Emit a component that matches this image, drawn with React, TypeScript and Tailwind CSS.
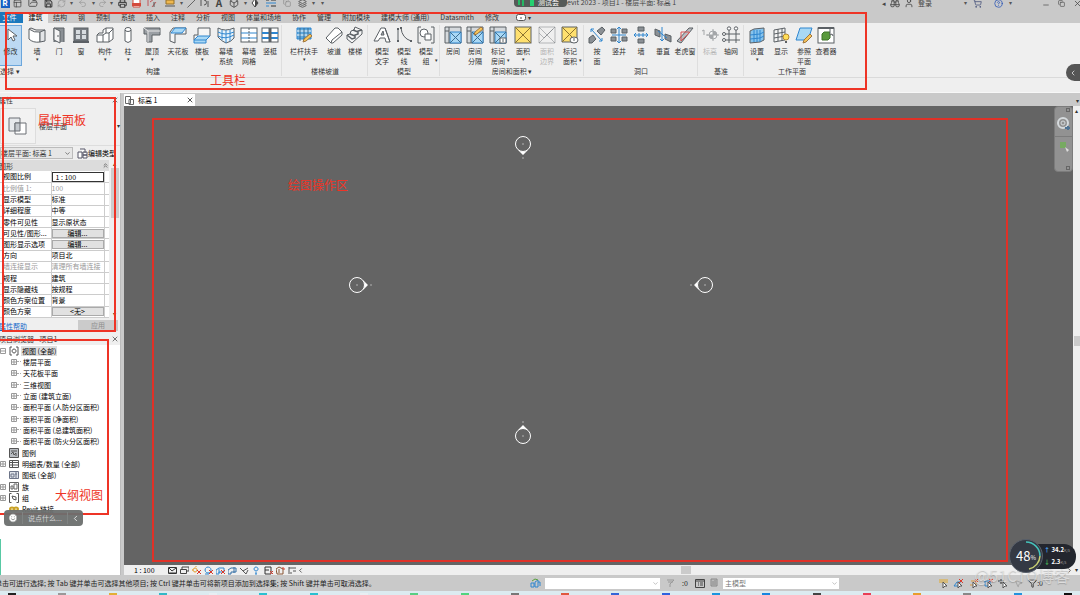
import type { ReactNode } from 'react';
import {
  Binoculars, Box, ChevronDown, ChevronLeft, ChevronRight, ChevronsUp, CircleHelp, Copy, Filter, FolderOpen,
  Layers, Minus, MousePointer2, PanelsTopLeft, Printer, Redo2, RefreshCw, Save, ShoppingCart, Slash, Smile,
  Undo2, User, X,
} from 'lucide-react';

const INK = '#5b6065';
const BLUE = '#2f86cf';
const SKY = '#a9d8f5';

// Ribbon drawings, all on an 18x18 grid
const drawings: Record<string, ReactNode> = {
  modify: <path d="M6 3v11l3-3 2 4 2-1-2-4h4z" fill="#fff" stroke={INK} />,
  wall: (
    <>
      <path d="M1 3q5 4 11 3v10Q5 17 1 13z" fill="#fff" stroke={INK} />
      <path d="M1 3l2-1q5 3 10 2h4v11l-5 1V6l5-2" fill="#e3e5e7" stroke={INK} />
    </>
  ),
  door: (
    <>
      <path d="M4 16V2h10v14" fill="#8b9095" stroke={INK} />
      <path d="M4 2l6 3v12l-6-3z" fill="#f4f4f4" stroke={INK} />
      <path d="M8 9v2" stroke={INK} />
    </>
  ),
  window: (
    <>
      <rect x="2" y="2" width="14" height="13" fill="#777c82" stroke={INK} />
      <path d="M4 4h4v4H4zM10 4h4v4h-4zM4 9h4v4H4zM10 9h4v4h-4z" fill="#d7dce0" />
      <path d="M1 16h16" stroke={INK} strokeWidth="2" />
    </>
  ),
  component: (
    <>
      <path d="M1 9l2-2h4V4l3-2h7v11l-4 3H1z" fill="#fff" stroke={INK} />
      <path d="M1 9h6l3-2V2M7 9v7M10 7h3l4-4M13 7v9" fill="none" stroke={INK} />
    </>
  ),
  column: (
    <>
      <path d="M6 4v11q3 3 6 0V4" fill="#fff" stroke={INK} />
      <ellipse cx="9" cy="3.500" rx="3" ry="2" fill="#fff" stroke={INK} />
    </>
  ),
  roof: (
    <>
      <path d="M1 2h16v7H9v7H4v-8H1z" fill="#9a9fa4" stroke={INK} />
      <path d="M1 2l4 3h12M5 5v11" fill="none" stroke="#e8e8e8" />
    </>
  ),
  ceiling: (
    <>
      <path d="M1 6l3-4h13v6H6v9l-5-2z" fill="#f5f5f5" stroke={INK} />
      <path d="M2 7l4-5h11l-4 5z" fill={SKY} stroke={BLUE} />
    </>
  ),
  floor: (
    <>
      <path d="M5 2h12v8l-4 4H1V9h4z" fill="#f5f5f5" stroke={INK} />
      <path d="M1 14l4-4h12l-4 4v3H1zM1 14h12" fill={SKY} stroke={BLUE} />
    </>
  ),
  curtainSystem: (
    <>
      <path d="M1 2q7 4 16 0v10q-3 4-8 5-5-2-8-6z" fill="#e7f3fb" stroke={INK} />
      <path d="M1 6q7 4 16 0M1 10q7 4 16-1M5 4v10M9 4v13M13 4v11" fill="none" stroke={BLUE} />
    </>
  ),
  curtainGrid: (
    <>
      <rect x="1" y="2" width="16" height="14" fill="#fff" stroke={INK} />
      <path d="M1 7h16M1 12h16" stroke={BLUE} />
      <path d="M9 2v14" stroke={INK} strokeDasharray="2 1" />
    </>
  ),
  mullion: (
    <>
      <rect x="1" y="2" width="16" height="14" fill="#fff" stroke={INK} />
      <path d="M1 7h16M1 12h16" stroke={BLUE} strokeWidth="2" />
      <path d="M9 2v14" stroke={INK} strokeWidth="3" />
    </>
  ),
  railing: (
    <>
      <path d="M2 2h14v11H2z" fill="#5fa9dd" stroke={BLUE} />
      <path d="M2 5h14M2 9h14" stroke="#fff" />
      <path d="M5 2v13M9 2v13M13 2v10" stroke="#3b6c93" />
      <path d="M8 16l1-3 6-5 2 2-6 5z" fill="#f7c65b" stroke="#a0753c" />
    </>
  ),
  ramp: (
    <>
      <path d="M1 12L10 2h3l4 4v3l-9 8H6z" fill="#fff" stroke={INK} />
      <path d="M6 17l1-3 10-8" fill="none" stroke={INK} />
    </>
  ),
  stair: (
    <>
      <path d="M1 9l3-1 1-3 3-1 1-3 7 3v4L6 17l-5-4z" fill="#f5f5f5" stroke={INK} />
      <path d="M1 9l5 4 3-1V9l3-1V5l4-1M4 8l5 2M7 4l5 2" fill="none" stroke={INK} strokeWidth="1.500" />
    </>
  ),
  modelText: (
    <>
      <path d="M1 15L8 2h4l5 14h-4l-1-4H7l-2 3z" fill="#fff" stroke={INK} />
      <path d="M8 9h3l-1-4zM12 2l5 14" fill="#aab0b5" stroke={INK} />
    </>
  ),
  modelLine: (
    <>
      <path d="M3 3v12M6 2q1 10 10 13" fill="none" stroke={INK} />
      <path d="M2 2h2v2H2zM2 14h2v2H2zM5 1h2v2H5zM15 14h2v2h-2z" fill={INK} />
    </>
  ),
  modelGroup: (
    <>
      <path d="M4 1H1v16h3M14 1h3v16h-3" fill="none" stroke={INK} />
      <circle cx="7" cy="7" r="4" fill="#fff" stroke={INK} />
      <path d="M8 8h6v6H8z" fill="#fff" stroke={INK} />
    </>
  ),
  room: <RoomBase />,
  roomSplit: (
    <>
      <RoomBase />
      <path d="M8 9l1-3 6-5 2 2-6 5z" fill="#f7c65b" stroke="#a0753c" />
    </>
  ),
  roomTag: (
    <>
      <RoomBase />
      <rect x="11" y="12" width="6" height="5" fill="#fff" stroke={INK} />
      <path d="M14 13v3" stroke={INK} />
    </>
  ),
  area: (
    <>
      <rect x="1" y="1" width="16" height="16" fill="#ffe06e" stroke={INK} />
      <path d="M1 1l16 16M17 1L1 17" stroke="#8d7331" />
    </>
  ),
  areaEdge: (
    <g opacity=".4">
      <path d="M1 1h16v16H1zM1 1l16 16M17 1L1 17M1 7l5 5 9-9" fill="none" stroke={INK} />
    </g>
  ),
  areaTag: (
    <>
      <path d="M1 1h15v15H1z" fill="#ffe06e" stroke={INK} />
      <path d="M1 1l15 15M16 1L1 16" stroke="#8d7331" />
      <ellipse cx="13" cy="14" rx="4" ry="3" fill="#fff" stroke={INK} />
      <path d="M13 12v3" stroke={INK} />
    </>
  ),
  byFace: (
    <>
      <path d="M9 5l5-4 3 3-4 5zM1 12l4-3 3 4-4 4H1z" fill="#8b9095" stroke={INK} />
      <path d="M3 3l11 12M3 6V3h3M14 12v3h-3" fill="none" stroke={BLUE} />
    </>
  ),
  shaft: (
    <>
      <path d="M1 3h5v4H1zM12 3h5v4h-5zM1 11h5v4H1zM12 11h5v4h-5z" fill="#8b9095" stroke={INK} />
      <path d="M9 1v16M2 9h14M7 3l2-2 2 2M7 15l2 2 2-2" fill="none" stroke={BLUE} />
    </>
  ),
  wallOpening: (
    <>
      <path d="M6 1h6v4H6zM6 13h6v4H6z" fill="#8b9095" stroke={INK} />
      <path d="M2 9h14M4 7L2 9l2 2M14 7l2 2-2 2M7 7v4M11 7v4" fill="none" stroke={BLUE} />
    </>
  ),
  vertical: (
    <>
      <path d="M1 3l5 2v6L1 9zM11 8l6 2v6l-6-3z" fill="#8b9095" stroke={INK} />
      <path d="M8 1v14M4 5l9 7M6 13l2 2 2-2" fill="none" stroke={BLUE} />
    </>
  ),
  dormer: (
    <>
      <path d="M1 15L13 2h4L5 17z" fill="#b8bcc0" stroke={INK} />
      <path d="M5 15V6h8M5 15l9-9" fill="none" stroke="#d65050" />
    </>
  ),
  level: (
    <g opacity=".5">
      <path d="M1 5l2-1v5M5 9h2" fill="none" stroke={INK} />
      <circle cx="12" cy="9" r="4" fill="#fff" stroke={INK} />
      <path d="M12 9V5a4 4 0 0 1 4 4zM12 9v4a4 4 0 0 1-4-4z" fill={INK} />
      <path d="M12 3v12M6 9h12" stroke={INK} />
    </g>
  ),
  grid: (
    <>
      <path d="M7 4v13M14 4v13M3 8h15M3 14h15" stroke={INK} />
      <circle cx="7" cy="2.500" r="1.700" fill="#fff" stroke={INK} />
      <circle cx="14" cy="2.500" r="1.700" fill="#fff" stroke={INK} />
      <circle cx="2" cy="8" r="1.500" fill="#fff" stroke={INK} />
      <circle cx="2" cy="14" r="1.500" fill="#fff" stroke={INK} />
    </>
  ),
  setPlane: (
    <>
      <path d="M2 5l4-2 10-1v12l-4 2-10 1z" fill="#87c4ee" stroke={INK} />
      <path d="M2 9l10-1 4-2M2 13l10-1 4-2M6 4v12M9 4v12M12 4v12" fill="none" stroke={BLUE} />
    </>
  ),
  showPlane: (
    <>
      <path d="M2 4l11-2v12L2 16zM2 8l11-2M2 12l11-2M6 3v12M10 3v12" fill="#f5f5f5" stroke={INK} />
      <circle cx="14" cy="11" r="3" fill="#ffdf58" stroke="#b8892c" />
      <path d="M13 15h2v2h-2z" fill={INK} />
    </>
  ),
  refPlane: (
    <>
      <path d="M5 2h12l-4 12H1z" fill={SKY} stroke={BLUE} />
      <path d="M8 17l1-3 6-6 2 2-6 6z" fill="#f7c65b" stroke="#a0753c" />
    </>
  ),
  viewer: (
    <>
      <rect x="1" y="2" width="16" height="15" fill="#fff" stroke={INK} />
      <path d="M1 2h16" stroke={INK} strokeWidth="2" />
      <path d="M5 8l2-2h6v6l-2 2H5z" fill="#5a9a3c" stroke="#3e7529" />
      <path d="M13 3v6l2-1 1 2" fill="#fff" stroke={INK} />
    </>
  ),
};

function RoomBase() {
  return (
    <>
      <path d="M1 1h16v16H1z" fill="#d5d9dc" stroke={INK} />
      <path d="M6 6h11v11H6z" fill={SKY} stroke={BLUE} />
      <path d="M6 6l11 11M17 6L6 17" stroke="#3d6f94" />
      <path d="M5 1v16M1 5h4" stroke={INK} />
    </>
  );
}

interface Tool {
  icon: string;
  lines: string[];
  width: string;
  arrow?: boolean;
  disabled?: boolean;
}

interface ToolPanel {
  title: string;
  tools: Tool[];
  arrow?: boolean;
}

const panels: ToolPanel[] = [
  {
    title: '构建',
    tools: [
      { icon: 'wall', lines: ['墙'], width: 'w-[22px]', arrow: true },
      { icon: 'door', lines: ['门'], width: 'w-[22px]' },
      { icon: 'window', lines: ['窗'], width: 'w-[22px]' },
      { icon: 'component', lines: ['构件'], width: 'w-[26px]', arrow: true },
      { icon: 'column', lines: ['柱'], width: 'w-5', arrow: true },
      { icon: 'roof', lines: ['屋顶'], width: 'w-7', arrow: true },
      { icon: 'ceiling', lines: ['天花板'], width: 'w-6' },
      { icon: 'floor', lines: ['楼板'], width: 'w-6', arrow: true },
      { icon: 'curtainSystem', lines: ['幕墙', '系统'], width: 'w-6' },
      { icon: 'curtainGrid', lines: ['幕墙', '网格'], width: 'w-[22px]' },
      { icon: 'mullion', lines: ['竖梃'], width: 'w-5' },
    ],
  },
  {
    title: '楼梯坡道',
    tools: [
      { icon: 'railing', lines: ['栏杆扶手'], width: 'w-10', arrow: true },
      { icon: 'ramp', lines: ['坡道'], width: 'w-5' },
      { icon: 'stair', lines: ['楼梯'], width: 'w-[22px]' },
    ],
  },
  {
    title: '模型',
    tools: [
      { icon: 'modelText', lines: ['模型', '文字'], width: 'w-6' },
      { icon: 'modelLine', lines: ['模型', '线'], width: 'w-5' },
      { icon: 'modelGroup', lines: ['模型', '组'], width: 'w-6', arrow: true },
    ],
  },
  {
    title: '房间和面积',
    arrow: true,
    tools: [
      { icon: 'room', lines: ['房间'], width: 'w-[22px]' },
      { icon: 'roomSplit', lines: ['房间', '分隔'], width: 'w-[22px]' },
      { icon: 'roomTag', lines: ['标记', '房间'], width: 'w-6', arrow: true },
      { icon: 'area', lines: ['面积'], width: 'w-[26px]', arrow: true },
      { icon: 'areaEdge', lines: ['面积', '边界'], width: 'w-[22px]', disabled: true },
      { icon: 'areaTag', lines: ['标记', '面积'], width: 'w-6', arrow: true },
    ],
  },
  {
    title: '洞口',
    tools: [
      { icon: 'byFace', lines: ['按', '面'], width: 'w-[22px]' },
      { icon: 'shaft', lines: ['竖井'], width: 'w-[22px]' },
      { icon: 'wallOpening', lines: ['墙'], width: 'w-[22px]' },
      { icon: 'vertical', lines: ['垂直'], width: 'w-[22px]' },
      { icon: 'dormer', lines: ['老虎窗'], width: 'w-[22px]' },
    ],
  },
  {
    title: '基准',
    tools: [
      { icon: 'level', lines: ['标高'], width: 'w-5', disabled: true },
      { icon: 'grid', lines: ['轴网'], width: 'w-[22px]' },
    ],
  },
  {
    title: '工作平面',
    tools: [
      { icon: 'setPlane', lines: ['设置'], width: 'w-[22px]', arrow: true },
      { icon: 'showPlane', lines: ['显示'], width: 'w-[26px]' },
      { icon: 'refPlane', lines: ['参照', '平面'], width: 'w-5' },
      { icon: 'viewer', lines: ['查看器'], width: 'w-6' },
    ],
  },
];

const tabs = [
  '结构', '钢', '预制', '系统', '插入', '注释', '分析', '视图', '体量和场地', '协作', '管理', '附加模块',
  '建模大师 (通用)', 'Datasmith', '修改',
];

const properties: { name: string; value: string; kind?: 'button' | 'input' | 'muted' }[] = [
  { name: '视图比例', value: '1 : 100', kind: 'input' },
  { name: '比例值 1:', value: '100', kind: 'muted' },
  { name: '显示模型', value: '标准' },
  { name: '详细程度', value: '中等' },
  { name: '零件可见性', value: '显示原状态' },
  { name: '可见性/图形...', value: '编辑...', kind: 'button' },
  { name: '图形显示选项', value: '编辑...', kind: 'button' },
  { name: '方向', value: '项目北' },
  { name: '墙连接显示', value: '清理所有墙连接', kind: 'muted' },
  { name: '规程', value: '建筑' },
  { name: '显示隐藏线', value: '按规程' },
  { name: '颜色方案位置', value: '背景' },
  { name: '颜色方案', value: '<无>', kind: 'button' },
];

const viewNodes = [
  '楼层平面', '天花板平面', '三维视图', '立面 (建筑立面)', '面积平面 (人防分区面积)', '面积平面 (净面积)',
  '面积平面 (总建筑面积)', '面积平面 (防火分区面积)',
];

const rootNodes = [
  { label: '图例', icon: 'legend', open: false },
  { label: '明细表/数量 (全部)', icon: 'table', open: true },
  { label: '图纸 (全部)', icon: 'sheet', open: false },
  { label: '族', icon: 'family', open: true },
  { label: '组', icon: 'group', open: true },
  { label: 'Revit 链接', icon: 'link', open: false },
];

const nodeIcons: Record<string, ReactNode> = {
  views: <path d="M3 1H1v8h2M7 1h2v8H7M5 3a2 2 0 1 0 .1 0" fill="none" stroke="#555" />,
  legend: <path d="M.5.500h9v9h-9zM2 3h6M2 6l2-2 1 3 2-2v3" fill="#b9bdc2" stroke="#555" />,
  table: <path d="M.5 1.500h9v7h-9zM.5 3.500h9M.5 6h9M3.500 2v6" fill="#fff" stroke="#555" />,
  sheet: <path d="M.5 1.500h9v7h-9zM2 4h3v3H2zM7 2v6M6 4h2" fill="#dfe3ea" stroke="#6c7488" />,
  family: <path d="M.5.500h9v9h-9zM2 7V4h2v3zM5 7V2h3v5z" fill="#fff" stroke="#666" />,
  group: <path d="M2.500.500h-2v9h2M7.500.500h2v9h-2M3 3l4 1v3L4 6z" fill="none" stroke="#555" />,
  link: (
    <g fill="none" stroke="#c9a227" strokeWidth="2">
      <ellipse cx="3" cy="5" rx="2" ry="1.500" />
      <ellipse cx="7" cy="5" rx="2" ry="1.500" />
    </g>
  ),
};

const dot = <span className="text-[6px] text-[#555]">▾</span>;

// Slot width and drawing of each quick access item
const quickItems: { width: string; node: ReactNode }[] = [
  { width: 'w-2.5', node: <span className="w-[9px] bg-[#1660c4] text-center text-[8px] font-bold text-white">R</span> },
  { width: 'w-3.5', node: <PanelsTopLeft size={9} /> },
  { width: 'w-[18px]', node: <FolderOpen size={10} /> },
  { width: 'w-3', node: <Save size={9} strokeWidth={3} /> },
  { width: 'w-3.5', node: <RefreshCw size={9} className="text-[#999]" /> },
  { width: 'w-1.5', node: dot },
  { width: 'w-4', node: <Undo2 size={9} className="text-[#999]" /> },
  { width: 'w-1.5', node: dot },
  { width: 'w-3', node: <Redo2 size={9} className="text-[#999]" /> },
  { width: 'w-1.5', node: dot },
  { width: 'w-4', node: <Printer size={9} strokeWidth={3} /> },
  { width: 'w-3', node: <svg width="9" height="10"><path d="M1 0h7v9H1z" fill="#fff" stroke="#d34a3c" /><path d="M0 5h9v3H0z" fill="#d34a3c" /></svg> },
  { width: 'w-5', node: <svg width="10" height="10"><path d="M1 1v7M3 4l4-3M5 9l4-5" stroke="#c2575a" fill="none" /><path d="M7 9V4" stroke="#555" /></svg> },
  { width: 'w-4', node: <svg width="10" height="10"><path d="M1 2h8v4H1z" fill="#efb84f" stroke="#95702b" /><path d="M0 8h10" stroke="#555" /></svg> },
  { width: 'w-1.5', node: dot },
  { width: 'w-3.5', node: <Slash size={9} /> },
  { width: 'w-3.5', node: <svg width="10" height="10"><path d="M1 2v6M4 2a2 2 0 1 1 0 5M8 3v6" stroke="#555" fill="none" /></svg> },
  { width: 'w-3.5', node: <span className="text-[10px] font-bold">A</span> },
  { width: 'w-4', node: <Box size={10} /> },
  { width: 'w-1.5', node: dot },
  { width: 'w-3.5', node: <svg width="10" height="10"><path d="M5 1l3 4-3 4-3-4z" fill="#fff" stroke="#444" /><path d="M5 1l3 4-3 4z" fill="#444" /></svg> },
  { width: 'w-[18px]', node: <svg width="10" height="10"><path d="M0 2h3M5 2h5M5 8h5" stroke="#333" /><path d="M0 5h10M0 8h3" stroke={BLUE} /></svg> },
  { width: 'w-3.5', node: <Copy size={8} className="text-[#888]" /> },
  { width: 'w-4', node: <Layers size={9} /> },
  { width: 'w-1.5', node: dot },
  { width: 'w-3', node: dot },
];

const QuickAccess = () => (
  <header className="relative flex h-3 shrink-0 overflow-hidden bg-[#c9c9c9] text-[#444]">
    <div className="flex h-1.5 items-center">
      {quickItems.map((item, i) => (
        <span key={i} className={`flex h-1.5 shrink-0 items-center justify-center ${item.width}`}>
          {item.node}
        </span>
      ))}
    </div>
    <div className="absolute -top-1 left-[514px] flex h-[11px] items-center">
      <div className="flex h-[11px] w-[53px] items-center gap-0.5 rounded-sm bg-[#555a58] px-1 text-[7px] text-white">
        <span className="h-1.5 w-0.5 bg-[#25b864]" />
        <span className="h-2 w-0.5 bg-[#25b864]" />
        <span className="ml-1 h-2 w-1 bg-[#25d070]" />
        <span className="ml-0.5 whitespace-nowrap">测试会</span>
      </div>
      <span className="whitespace-nowrap text-[7px]">evit 2023 - 项目1 - 楼层平面: 标高 1</span>
    </div>
    <div className="-mr-0.5 ml-auto flex h-1.5 items-center text-[7px]">
      <span className="mr-1">◂</span>
      <Binoculars size={10} />
      <User size={10} className="mx-1" />
      <span className="mr-8">登录</span>
      {dot}
      <ShoppingCart size={9} className="mr-3 ml-1.5 text-[#44507a]" />
      <CircleHelp size={9} className="mr-1.5 text-[#2753b5]" />
      {dot}
      <Minus size={8} className="mt-1 ml-[30px]" />
      <Copy size={7} className="mx-2" />
      <X size={9} />
    </div>
  </header>
);

const ToolButton = ({ tool }: { tool: Tool }) => {
  const twoLines = tool.lines.length > 1;
  return (
    <button
      disabled={tool.disabled}
      className={`relative flex h-[41px] flex-col items-center pt-px whitespace-nowrap leading-[10px] ${tool.width} ${tool.disabled ? 'text-[#b5b5b5]' : ''}`}
    >
      <svg width="18" height="18" viewBox="0 0 18 18" className="mb-0.5 shrink-0">
        {drawings[tool.icon]}
      </svg>
      {tool.lines.map((line) => (
        <span key={line}>{line}</span>
      ))}
      {tool.arrow && !twoLines && <span className="text-[5px] leading-[5px]">▾</span>}
      {tool.arrow && twoLines && <span className="absolute right-0 bottom-1 text-[5px] leading-[5px]">▾</span>}
    </button>
  );
};

const Ribbon = () => (
  <section className="shrink-0 bg-[#efefef]">
    <nav className="flex h-[11px] items-center gap-[11px] bg-[#c9c9c9] leading-[11px] whitespace-nowrap">
      <div className="flex">
        <button className="w-[23px] bg-[#1a78bd] pr-1 text-white">文件</button>
        <button className="w-[25px] bg-[#efefef] text-black">建筑</button>
      </div>
      {tabs.map((tab, i) => (
        <button key={tab} className={i === 0 ? '-ml-1.5' : ''}>{tab}</button>
      ))}
      <button className="ml-1.5 flex items-center gap-0.5" aria-label="最小化">
        <svg width="10" height="7" fill="#fff" stroke="#555">
          <rect x=".5" y=".5" width="9" height="6" rx="2" />
          <path d="M4 4h2" />
        </svg>
        <span className="text-[6px]">▾</span>
      </button>
    </nav>
    <div className="flex border-b border-[#dadada] pt-0.5 pb-px">
      <div className="flex w-6 flex-col">
        <button className="-ml-px flex h-[41px] w-[23px] flex-col items-center border border-[#6ba6dc] bg-[#bcd9f3] leading-[10px]">
          <svg width="18" height="18" viewBox="0 0 18 18" className="mb-0.5 shrink-0">{drawings.modify}</svg>
          修改
        </button>
        <div className="h-[10px] leading-[10px] whitespace-nowrap">选择 ▾</div>
      </div>
      {panels.map((panel, i) => (
        <div
          key={panel.title}
          className={`flex flex-col pr-px pl-0.5 ${i < panels.length - 1 ? 'border-r border-[#dedede]' : ''}`}
        >
          <div className="flex">
            {panel.tools.map((tool) => (
              <ToolButton key={tool.icon} tool={tool} />
            ))}
          </div>
          <div className="h-[10px] text-center leading-[10px]">
            {panel.title}
            {panel.arrow && ' ▾'}
          </div>
        </div>
      ))}
    </div>
    <div className="h-[15px] border-b border-[#f7f7f7]" />
  </section>
);

const PropertiesPanel = () => (
  <section className="relative shrink-0 bg-[#efefef]">
    <div className="flex h-[13px] items-center justify-between pr-px">
      <h2 className="-ml-px">属性</h2>
      <button aria-label="关闭属性"><X size={8} /></button>
    </div>
    <div className="flex h-10 items-center border-b border-[#ddd]">
      <div className="flex h-9 w-9 items-center justify-center border border-[#ddd] bg-[#f2f2f2]">
        <svg width="20" height="20" viewBox="0 0 20 20" stroke="#6a6f75">
          <path d="M1 2h11v13H1z" fill="#e6e9ec" />
          <path d="M7 7h11v11H7z" fill="#fff" />
          <path d="M7 7h5v8H7z" fill="#c3c8cd" />
        </svg>
      </div>
      <span className="ml-[3px] flex-1">楼层平面</span>
      <span className="text-[6px]">▾</span>
    </div>
    <div className="flex h-3.5 items-center gap-1 whitespace-nowrap">
      <div className="relative h-3 w-[73px]">
        <select aria-label="视图" className="h-3 w-full appearance-none border border-[#bbb] bg-[#e6e6e6] leading-[10px]">
          <option>楼层平面: 标高 1</option>
        </select>
        <ChevronDown size={7} className="absolute top-[3px] right-0.5" />
      </div>
      <button className="flex items-center text-black">
        <svg width="11" height="11" fill="#fff" stroke="#556">
          <path d="M1 4h4v6H1zM3 1h5v4M6 4h4v3H6zM6 7h4v3H6z" />
        </svg>
        编辑类型
      </button>
    </div>
    <div className="flex h-[158px]">
      <div className="flex w-[109px] shrink-0 flex-col">
        <div className="flex h-[11px] items-center justify-between bg-[#dcdcdc]">
          <span className="-ml-px">图形</span>
          <ChevronsUp size={7} />
        </div>
        <table className="h-[147px] w-full table-fixed border-collapse bg-white leading-[9px] whitespace-nowrap">
          <tbody>
            {properties.map((row) => (
              <tr key={row.name} className={`border-b border-[#ccc] ${row.kind === 'muted' ? 'text-[#999]' : 'text-black'}`}>
                <td className="w-[51px] overflow-hidden border-r border-[#ccc] p-0 pl-[3px]">{row.name}</td>
                <td className="w-[53px] overflow-hidden border-r border-[#ccc] p-0">
                  {row.kind === 'button' && (
                    <button className="block h-[9px] w-full border border-[#aaa] bg-[#e1e1e1] leading-[7px]">{row.value}</button>
                  )}
                  {row.kind === 'input' && (
                    <input
                      aria-label={row.name}
                      defaultValue={row.value}
                      className="block h-2.5 w-full border border-[#333] px-[3px] leading-[8px]"
                    />
                  )}
                  {row.kind !== 'button' && row.kind !== 'input' && <span>{row.value}</span>}
                </td>
                <td className="p-0" />
              </tr>
            ))}
          </tbody>
        </table>
      </div>
      <div className="flex flex-1 flex-col items-center justify-between text-[6px] leading-[8px]">
        <span>▴</span>
        <span className="mb-auto h-[50px] w-2 bg-[#cdcdcd]" />
        <span>▾</span>
      </div>
    </div>
    <div className="flex h-[15px] items-center justify-between pr-0.5">
      <a href="#help" className="-ml-px text-[#1769c9] underline">属性帮助</a>
      <button disabled className="h-[11px] w-10 bg-[#cbcbcb] leading-[11px] text-[#8d8d8d]">应用</button>
    </div>
    <div className="pointer-events-none absolute top-1 right-1 bottom-px left-0.5 border-2 border-[#ee3426]" />
    <span className="absolute top-[18px] left-[38px] text-[12px] leading-[18px] text-[#ee3426]">属性面板</span>
  </section>
);

const Expander = ({ open = false }: { open?: boolean }) => (
  <svg width="6" height="6" className="shrink-0" fill="#fff" stroke="#999">
    <path d="M.5.500h5v5h-5z" />
    <path d={open ? 'M1 3h4' : 'M1 3h4M3 1v4'} />
  </svg>
);

const ProjectBrowser = () => (
  <section className="relative flex-1 bg-white">
    <div className="flex h-3 items-center justify-between bg-[#efefef] pr-px">
      <h2 className="-ml-px whitespace-nowrap">项目浏览器 - 项目1</h2>
      <button aria-label="关闭项目浏览器"><X size={8} /></button>
    </div>
    <ul className="grid h-[170px] auto-rows-fr whitespace-nowrap text-black">
      <li className="flex items-center">
        <Expander open />
        <svg width="10" height="10" className="mr-0.5 ml-[3px]">{nodeIcons.views}</svg>
        <span className="bg-[#dedede] px-px">视图 (全部)</span>
      </li>
      {viewNodes.map((label) => (
        <li key={label} className="flex items-center pl-[11px]">
          <Expander />
          <span className="mr-0.5 w-1 border-t border-dotted border-[#aaa]" />
          {label}
        </li>
      ))}
      {rootNodes.map((node) => (
        <li key={node.label} className="flex items-center">
          {node.open ? <Expander /> : <span className="w-1.5" />}
          <svg width="10" height="10" className="mr-[3px] ml-[3px]">{nodeIcons[node.icon]}</svg>
          {node.label}
        </li>
      ))}
    </ul>
    <div className="pointer-events-none absolute top-1.5 -left-0.5 h-44 w-[111px] border-2 border-[#ee3426]" />
    <span className="absolute top-[153px] left-[55px] text-[12px] leading-[18px] text-[#ee3426]">大纲视图</span>
    <div className="absolute top-[177px] left-1 flex h-4 w-[79px] items-center rounded-sm bg-[#6b6f6e]/95 text-white">
      <Smile size={10} className="mx-1" fill="#fff" stroke="#6b6f6e" />
      <span className="h-3 border-l border-[#7f8382]" />
      <span className="flex-1 text-center text-[#d5d5d5]">说点什么...</span>
      <span className="h-3 border-l border-[#7f8382]" />
      <ChevronLeft size={9} className="mx-[3px]" />
    </div>
    <div className="absolute bottom-0 left-0 h-9 w-px bg-[#58c9a4]" />
  </section>
);

// Elevation marks on the free drawing area
const markers = [
  { place: 'left-[384px] top-[23px]', turn: 'rotate-0' },
  { place: 'left-[218px] top-[164px]', turn: '-rotate-90' },
  { place: 'left-[566px] top-[164px]', turn: 'rotate-90' },
  { place: 'left-[384px] top-[315px]', turn: 'rotate-180' },
];

const Canvas = () => (
  <div className="relative flex-1 overflow-hidden bg-[#646464]">
    {markers.map((marker) => (
      <svg key={marker.place} width="30" height="30" viewBox="0 0 30 30" className={`absolute ${marker.place} ${marker.turn}`} fill="none" stroke="#fff">
        <circle cx="15" cy="15" r="7.500" />
        <path d="M10 21q5 3 10 0l-5 5z" fill="#fff" stroke="none" />
        <path d="M14.500 15h1M14.500 29h1" />
      </svg>
    ))}
    <span className="absolute top-[70px] left-[164px] text-[12px] leading-[18px] text-[#ee3426]">绘图操作区</span>
    <div className="pointer-events-none absolute top-3 right-[65px] bottom-[3px] left-7 border-2 border-[#e03127]" />
    <div className="absolute top-0 right-0 flex h-[66px] w-[19px] flex-col items-center rounded-sm border border-[#7c7c7c] bg-[#929292]">
      <span className="mt-px mr-0.5 h-1 w-1 self-end border border-[#666]" />
      <svg width="16" height="16" className="mt-1" fill="none" stroke="#d5dadd">
        <circle cx="7" cy="7" r="5" strokeWidth="2" />
        <circle cx="7" cy="7" r="2" />
        <path d="M9 12h5M12 10v4" stroke="#4f7393" strokeWidth="2" />
      </svg>
      <span className="mt-1 w-full border-t border-[#7c7c7c]" />
      <svg width="12" height="14" className="mt-1">
        <path d="M2 1h6v6H2z" fill="#77aa62" />
        <path d="M7 6l4 3-2 2z" fill="#ddd" />
      </svg>
      <span className="mr-0.5 mt-auto mb-px h-1 w-1 self-end border border-[#666]" />
    </div>
  </div>
);

const viewIcons: { d: string; color: string; mark?: string }[] = [
  { d: 'M.5 1.500h8v6h-8zM1 2l3 3 4-3M1 7h7', color: '#333' },
  { d: 'M.5 3.500h6v4h-6zM2 3V1h7v4H7', color: '#444' },
  { d: 'M3 2a2 2 0 1 0 .1 0M0 4h1M4 0v1', color: '#e39d25', mark: 'M5 4l4 4M9 4L5 8' },
  { d: 'M4 1a3 3 0 1 0 .1 0M1 8h4', color: BLUE, mark: 'M5 4l4 4M9 4L5 8' },
  { d: 'M0 4l3-2h5v4H3v2H0zM3 3v4', color: BLUE, mark: 'M5 4l4 4M9 4L5 8' },
  { d: 'M0 4l3-2h5v4H3v2H0zM6 1v6', color: '#326fa5' },
  { d: 'M0 2l3 3 5-3M3 5l3 3 2-4', color: '#555' },
  { d: 'M4 1a2 2 0 1 0 .1 0M3 7h2M3 8h2', color: BLUE },
  { d: 'M1 1h6v7H1zM1 4h4', color: '#333', mark: 'M6 5l3 3M9 5L6 8' },
  { d: 'M0 3l3-2 4 2v5H1zM3 3v4', color: '#885533', mark: 'M6 2h2v2' },
  { d: 'M1 1v7M1 2h7M5 5h3M3 6v2', color: '#555' },
];

const ViewBar = () => (
  <div className="flex h-2.5 shrink-0 items-center bg-[#efefef] text-black">
    <span className="mr-[9px] ml-2.5 w-[25px] whitespace-nowrap">1 : 100</span>
    <div className="flex gap-[3px]">
      {viewIcons.map((icon, i) => (
        <svg key={i} width="9" height="9" fill="none">
          <path d={icon.d} stroke={icon.color} />
          {icon.mark && <path d={icon.mark} stroke="#d93a2b" />}
        </svg>
      ))}
    </div>
    <ChevronLeft size={7} />
    <div className="flex-1">
      <div className="ml-[377px] h-2 w-2.5 bg-[#cbcbcb]" />
    </div>
    <ChevronRight size={7} />
  </div>
);

const statusIcons: { d: string; color: string; mark?: string }[] = [
  { d: 'M1 2h9M1 4h9', color: '#e2aa2d' },
  { d: 'M1 8l3-4h4M1 8h6', color: BLUE, mark: 'M6 1l4 4M10 1L6 5' },
  { d: 'M2 7h6M3 3h5v4', color: '#d99a43', mark: 'M7 1l3 3M10 1L7 4' },
  { d: 'M2 3h5v5H2z', color: BLUE, mark: 'M6 1l4 3M10 1L6 4' },
  { d: 'M3 1v5M0 3h6', color: '#333' },
];

const StatusBar = () => (
  <footer className="relative flex h-4 shrink-0 items-center bg-[#c9c9c9] whitespace-nowrap text-[#222]">
    <span className="-ml-[5px] w-[535px]">单击可进行选择; 按 Tab 键并单击可选择其他项目; 按 Ctrl 键并单击可将新项目添加到选择集; 按 Shift 键并单击可取消选择。</span>
    <svg width="11" height="11" fill="none">
      <path d="M1 5h3v4H1zM5 4l3-2v7H5zM8 4h2v4" stroke={BLUE} />
      <path d="M2 3l3-2 3 1" stroke="#5aa240" />
    </svg>
    <div className="relative ml-1">
      <select aria-label="工作集" className="block h-[11px] w-[115px] appearance-none bg-white">
        <option></option>
      </select>
      <ChevronDown size={7} className="absolute top-0.5 right-px text-[#999]" />
    </div>
    <svg width="10" height="10" className="mx-1.5" fill="none" stroke="#999">
      <path d="M1 2h7L4 6v3M2 4h5" />
    </svg>
    <span className="w-[13px]">:0</span>
    <svg width="10" height="10" fill="none" stroke="#444"><path d="M.5 1.500h9v8h-9zM.5 3h9M3 5h1M5 5h3M3 7h1M5 7h3" /></svg>
    <svg width="9" height="10" className="mr-1 ml-[5px]" fill="#bbb" stroke="#888"><path d="M1 1h6v7H1zM3 3v4M5 2v5" /></svg>
    <div className="relative">
      <select aria-label="设计选项" className="block h-[11px] w-[116px] appearance-none bg-white px-0.5 text-[#777]">
        <option>主模型</option>
      </select>
      <ChevronDown size={7} className="absolute top-0.5 right-px text-[#999]" />
    </div>
    <div className="mr-[37px] ml-auto flex items-center gap-1">
      {statusIcons.map((icon, i) => (
        <svg key={i} width="11" height="11" fill="none">
          <path d={icon.d} stroke={icon.color} />
          <path d="M5 4v6l2-2h2z" fill="#fff" stroke="#555" />
          {icon.mark && <path d={icon.mark} stroke="#d93a2b" />}
        </svg>
      ))}
      <MousePointer2 size={9} className="mx-px text-[#999]" />
      <span className="flex items-center"><Filter size={9} />:0</span>
    </div>
    <span className="absolute -top-[11px] right-2.5 text-[16px] leading-[22px] text-[#f0f0f0]/60 text-shadow-xs">@51CTO博客</span>
  </footer>
);

const SpeedWidget = () => (
  <div className="absolute right-1 bottom-[22px] flex h-[34px] items-center">
    <div className="relative z-10 flex h-[34px] w-[34px] items-center justify-center rounded-full border border-[#59606b] bg-[#343944] text-white">
      <svg width="34" height="34" className="absolute -top-px -left-px" fill="none" strokeWidth="1.500">
        <path d="M17 3a14 14 0 0 1 14 14" stroke="#45c2bb" />
        <path d="M31 17a14 14 0 0 1-11 13" stroke="#c8cf72" />
      </svg>
      <span className="text-[13px]">48</span>
      <span className="mt-1 text-[6px]">%</span>
    </div>
    <div className="-ml-3 flex h-[25px] w-[45px] flex-col justify-center rounded-r-xl bg-[#23262e] pl-[13px] text-[6px] leading-[12px] font-bold whitespace-nowrap text-white">
      <span><span className="text-[#4da8ef]">↑</span> 34.2<span className="text-[4px] font-normal text-[#999]">K/s</span></span>
      <span><span className="text-[#49bd58]">↓</span> 2.3<span className="text-[4px] font-normal text-[#999]">K/s</span></span>
    </div>
  </div>
);

const taskColors = [
  'bg-[#222]', 'bg-[#999]', 'bg-[#e2ae35]', 'bg-[#32b8c6]', 'bg-[#e8eef2]', 'bg-[#2ac0d0]', 'bg-[#2ac0d0]', 'bg-[#e8eef2]',
  'bg-[#58ce83]', 'bg-[#52d47f]', 'bg-[#777]', 'bg-[#e0573e]', 'bg-[#3565d8]', 'bg-[#2f62df]', 'bg-[#1b95df]', 'bg-[#1786e0]',
  'bg-[#444]', 'bg-[#e83f55]', 'bg-[#e99c2c]', 'bg-[#888]', 'bg-[#2492dd]', 'bg-[#111]',
];

export default function App() {
  return (
    <div className="relative flex h-screen w-full flex-col overflow-hidden bg-[#c9c9c9] font-['Noto_Sans_CJK_SC',sans-serif] text-[7px] leading-[10px] text-[#333]">
      <QuickAccess />
      <div className="relative shrink-0">
        <Ribbon />
        <div className="pointer-events-none absolute top-0 bottom-[3px] left-[5px] w-[862px] border-2 border-[#ee3426]" />
        <span className="absolute bottom-1 left-[210px] text-[12px] leading-[18px] text-[#ee3426]">工具栏</span>
        <button aria-label="展开" className="absolute right-0 bottom-3 flex h-[17px] w-3.5 items-center justify-center rounded-l-full bg-[#555] text-white">
          <ChevronLeft size={8} />
        </button>
      </div>
      <main className="flex min-h-0 flex-1">
        <aside className="flex w-[121px] shrink-0 flex-col border-r border-[#bbb]">
          <PropertiesPanel />
          <ProjectBrowser />
        </aside>
        <div className="ml-[3px] flex min-w-0 flex-1 flex-col">
          <div className="flex h-[13px] shrink-0 items-end justify-between">
            <div className="flex h-3 w-[71px] items-center bg-white px-px text-black">
              <svg width="9" height="9" fill="#fff" stroke="#666"><path d="M.5.500h5v7h-5zM4 3.500h4.500v5H4z" /></svg>
              <span className="ml-1 flex-1">标高 1</span>
              <button aria-label="关闭视图"><X size={8} /></button>
            </div>
            <span className="mr-px text-[6px]">▾</span>
          </div>
          <div className="flex min-h-0 flex-1">
            <div className="flex min-w-0 flex-1 flex-col">
              <Canvas />
              <ViewBar />
            </div>
            <div className="flex w-[7px] flex-col items-center justify-between bg-[#efefef] text-[6px]">
              <span>▴</span>
              <span className="h-2.5 w-1.5 bg-[#cbcbcb]" />
              <span>▾</span>
            </div>
          </div>
        </div>
      </main>
      <StatusBar />
      <div className="flex h-1 shrink-0 items-end justify-between bg-[#dcebf0] px-2">
        {taskColors.map((color, i) => (
          <span key={i} className={`h-0.5 w-2 ${color}`} />
        ))}
      </div>
      <SpeedWidget />
    </div>
  );
}
